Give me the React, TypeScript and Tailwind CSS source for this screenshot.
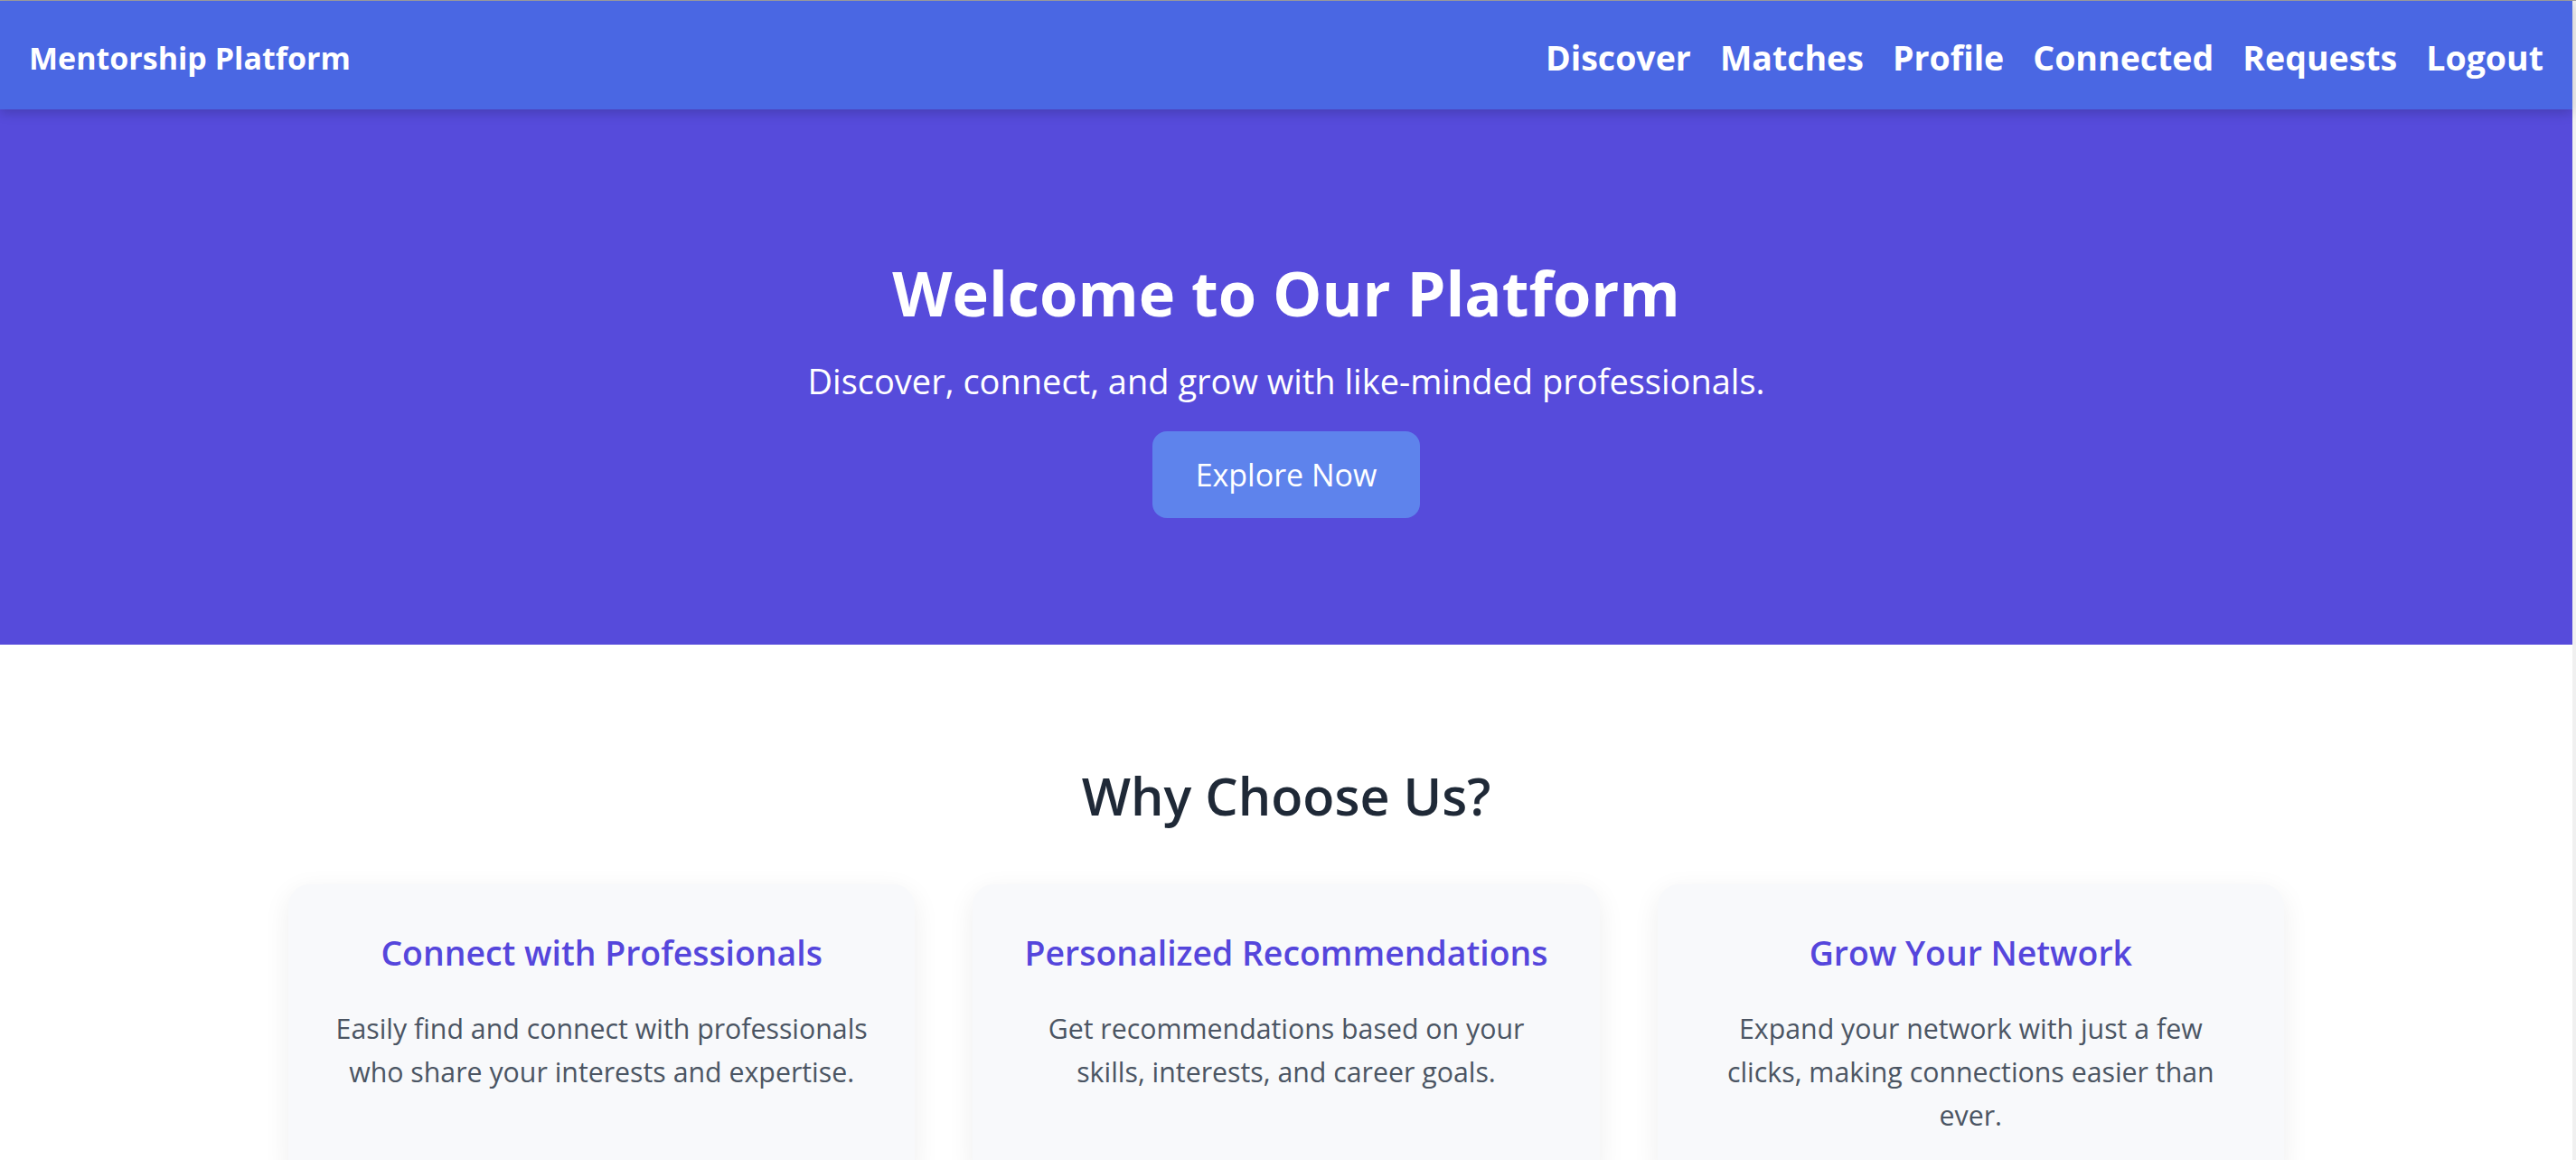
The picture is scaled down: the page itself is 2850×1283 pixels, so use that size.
import React from 'react';

const navLinks = ['Discover', 'Matches', 'Profile', 'Connected', 'Requests', 'Logout'];

const features = [
  {
    title: 'Connect with Professionals',
    text: 'Easily find and connect with professionals who share your interests and expertise.',
  },
  {
    title: 'Personalized Recommendations',
    text: 'Get recommendations based on your skills, interests, and career goals.',
  },
  {
    title: 'Grow Your Network',
    text: 'Expand your network with just a few clicks, making connections easier than ever.',
  },
];

export default function App() {
  return (
    <div className="flex min-h-screen w-full border-t border-[#a0a0a0] bg-white font-['Open_Sans',sans-serif]">
      <div className="flex-1">
        {/* Navbar */}
        <nav className="relative z-10 flex h-[120px] items-center justify-between bg-[#4a67e3] px-[32px] pt-[5px] shadow-[0_4px_12px_rgba(0,0,0,0.18)]">
          <span className="text-[34px] font-bold leading-[48px] text-white">Mentorship Platform</span>
          <ul className="flex items-center gap-[32px]">
            {navLinks.map((link) => (
              <li key={link}>
                <a href="#" className="text-[37.5px] font-bold leading-[56px] text-white">
                  {link}
                </a>
              </li>
            ))}
          </ul>
        </nav>

        {/* Hero */}
        <section className="flex h-[592px] flex-col items-center bg-[#564bdb] pt-[167px] text-center text-white">
          <h1 className="text-[68.5px] font-bold leading-[72px]">Welcome to Our Platform</h1>
          <p className="mt-[33px] text-[38px] leading-[56px]">
            Discover, connect, and grow with like-minded professionals.
          </p>
          <button className="mt-[28px] h-[96px] w-[296px] rounded-[16px] bg-[#5e83ec] text-[34px] leading-[96px] text-white">
            Explore Now
          </button>
        </section>

        {/* Why choose us */}
        <section className="pt-[131px]">
          <h2 className="text-center text-[57.5px] font-semibold leading-[72px] text-[#1f2937]">Why Choose Us?</h2>
          <div className="mx-auto mt-[62px] grid max-w-[2208px] grid-cols-3 gap-[64px]">
            {features.map((f) => (
              <div
                key={f.title}
                className="rounded-[24px] bg-[#f8f9fb] p-[48px] text-center shadow-[0_8px_30px_rgba(0,0,0,0.07)]"
              >
                <h3 className="whitespace-nowrap text-[37.4px] font-semibold leading-[56px] text-[#5546dc]">
                  {f.title}
                </h3>
                <p className="mt-[32px] text-[30.3px] leading-[48px] text-[#4b5563]">{f.text}</p>
              </div>
            ))}
          </div>
        </section>
      </div>

      {/* Scrollbar strip */}
      <div className="w-[4px] shrink-0 bg-[#f0f0f0]" />
    </div>
  );
}
